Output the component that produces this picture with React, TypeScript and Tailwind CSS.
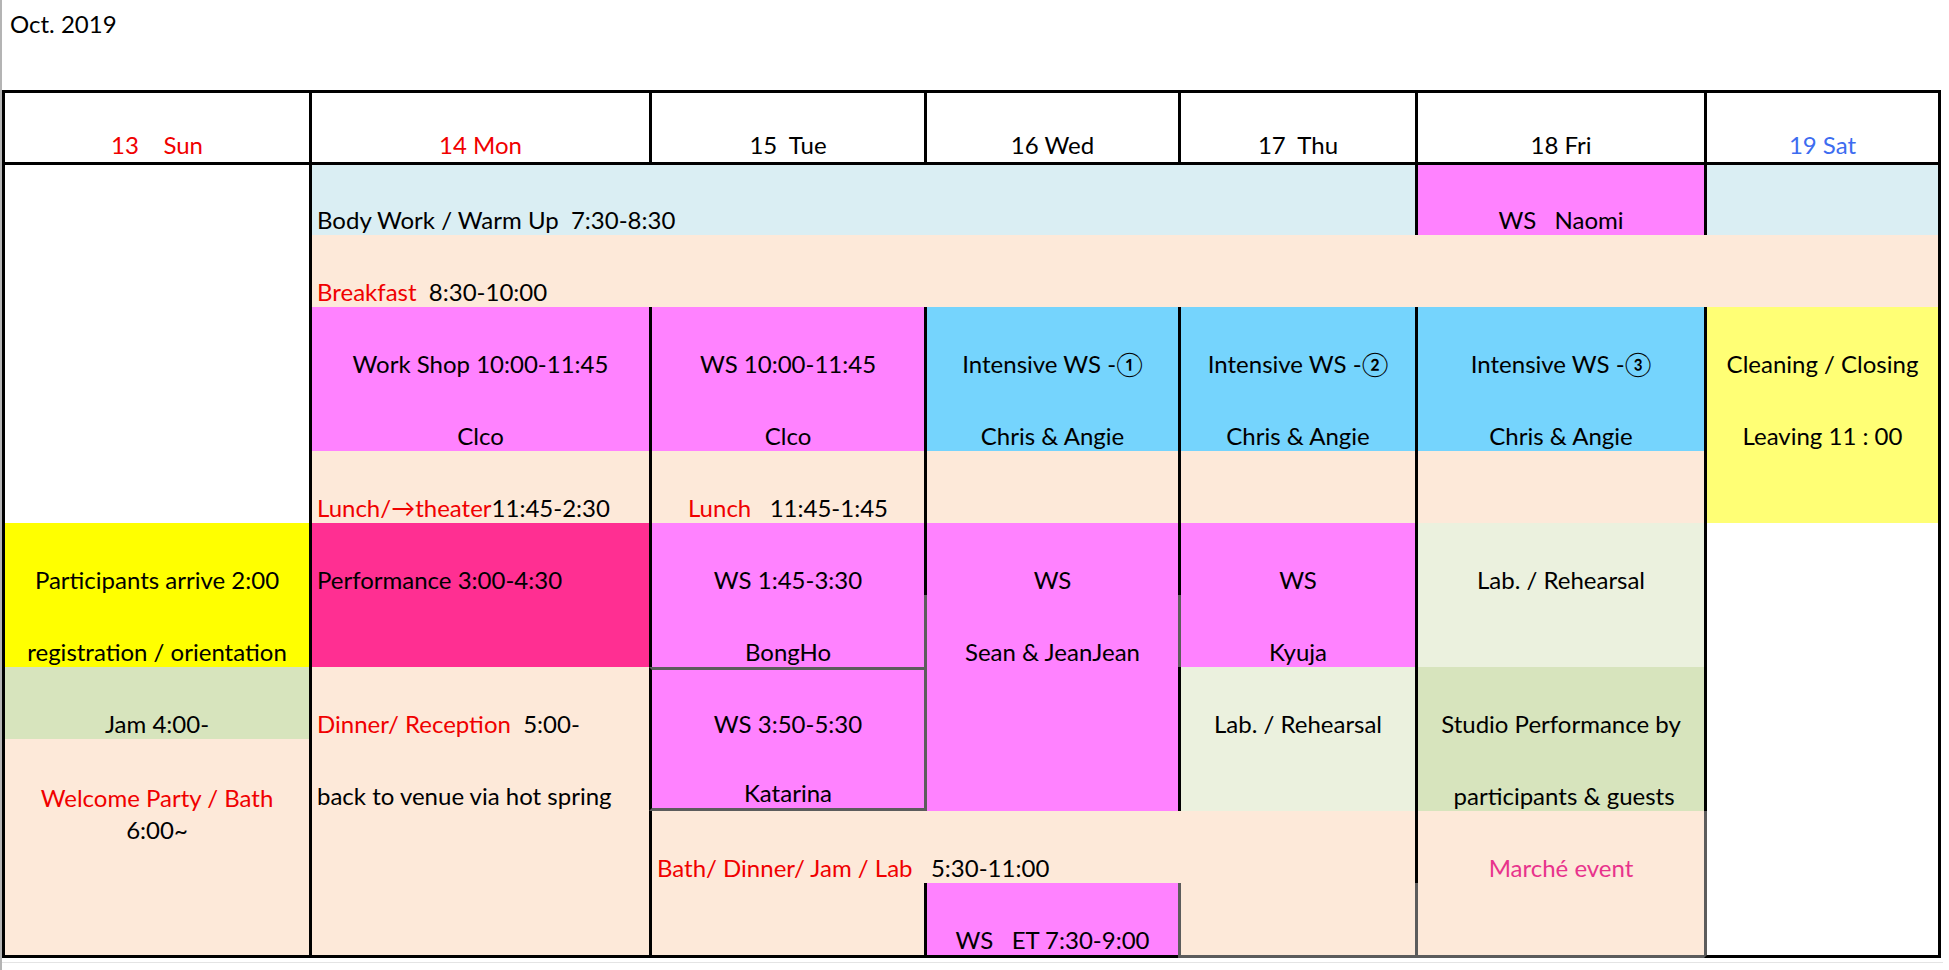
import React from "react";

type Edge = "k" | "g" | "n";

const cls = (...xs: (string | false | undefined)[]) => xs.filter(Boolean).join(" ");

const BG = {
  white: "bg-white",
  sky: "bg-[#daeef3]",
  peach: "bg-[#fde9d9]",
  magenta: "bg-[#ff82ff]",
  blue: "bg-[#75d4fd]",
  lemon: "bg-[#ffff75]",
  yellow: "bg-[#ffff00]",
  hot: "bg-[#ff2f92]",
  olive: "bg-[#d7e4bd]",
  mint: "bg-[#ebf1de]",
};

const LEFT: Record<Edge, string> = {
  k: "border-l-[3px] border-l-black",
  g: "border-l-[3px] border-l-[#5c5c5c]",
  n: "",
};

function R({ children }: { children: React.ReactNode }) {
  return <span className="text-[#f00000]">{children}</span>;
}

interface CellProps {
  pos: string;
  bg: string;
  left?: Edge;
  align?: "l" | "c";
  lines?: React.ReactNode[];
  extra?: string;
}

// one grid item; every line sits at the bottom of its own 72px band
function Cell({ pos, bg, left = "n", align = "c", lines = [""], extra }: CellProps) {
  return (
    <div className={cls("flex flex-col min-w-0", pos, bg, LEFT[left], extra)}>
      {lines.map((line, i) => (
        <div
          key={i}
          className={cls(
            "flex flex-1 basis-0 items-end",
            align === "c" ? "justify-center" : "justify-start pl-[5px]"
          )}
        >
          <span className="whitespace-pre pb-[3px] leading-[24px]">{line}</span>
        </div>
      ))}
    </div>
  );
}

const days: { label: string; color: string }[] = [
  { label: "13\u00a0\u00a0\u00a0\u00a0Sun", color: "text-[#f00000]" },
  { label: "14 Mon", color: "text-[#f00000]" },
  { label: "15\u00a0\u00a0Tue", color: "text-black" },
  { label: "16 Wed", color: "text-black" },
  { label: "17\u00a0\u00a0Thu", color: "text-black" },
  { label: "18 Fri", color: "text-black" },
  { label: "19 Sat", color: "text-[#3d6cf0]" },
];

const headerPos = [
  "col-start-1 row-start-1",
  "col-start-2 row-start-1",
  "col-start-3 row-start-1",
  "col-start-4 row-start-1",
  "col-start-5 row-start-1",
  "col-start-6 row-start-1",
  "col-start-7 row-start-1",
];

export default function App() {
  return (
    <div className="w-[1949px] h-[970px] bg-white text-black text-[24px] font-['Lato','Noto_Sans_CJK_JP',sans-serif] border-l-2 border-l-[#b4b4b4] overflow-hidden">
      <div className="h-[90px] pl-[8px] pt-[12px] leading-[24px]">Oct. 2019</div>

      <div className="grid w-[1939px] grid-cols-[304px_340px_275px_254px_237px_289px_234px] grid-rows-[72px_70px_repeat(9,72px)_75px] border-l-[3px] border-t-[3px] border-r-[3px] border-black">
        {days.map((d, i) => (
          <div
            key={d.label}
            className={cls(
              "flex items-end justify-center pb-[5px] border-b-[3px] border-b-black",
              headerPos[i],
              i > 0 && LEFT.k,
              d.color
            )}
          >
            <span className="whitespace-pre leading-[24px]">{d.label}</span>
          </div>
        ))}

        {/* Sun */}
        <Cell pos="col-start-1 row-start-2 row-span-5" bg={BG.white} />
        <Cell
          pos="col-start-1 row-start-7 row-span-2"
          bg={BG.yellow}
          lines={["Participants arrive 2:00", "registration / orientation"]}
        />
        <Cell pos="col-start-1 row-start-9" bg={BG.olive} lines={["Jam 4:00-"]} />
        <div className={cls("col-start-1 row-start-10 row-span-3 flex flex-col items-center border-b-[3px] border-b-black", BG.peach)}>
          <div className="flex h-[72px] shrink-0 items-end">
            <span className="whitespace-pre pb-[1px] leading-[24px]">
              <R>Welcome Party / Bath</R>
            </span>
          </div>
          <span className="pt-[7px] leading-[24px]">6:00~</span>
        </div>

        {/* row 1 */}
        <Cell
          pos="col-start-2 col-span-4 row-start-2"
          bg={BG.sky}
          left="k"
          align="l"
          lines={["Body Work / Warm Up\u00a0\u00a07:30-8:30"]}
        />
        <Cell pos="col-start-6 row-start-2" bg={BG.magenta} left="k" lines={["WS\u00a0\u00a0\u00a0Naomi"]} />
        <Cell pos="col-start-7 row-start-2" bg={BG.sky} left="k" />

        {/* row 2 */}
        <Cell
          pos="col-start-2 col-span-6 row-start-3"
          bg={BG.peach}
          left="k"
          align="l"
          lines={[
            <>
              <R>Breakfast</R>
              {"\u00a0\u00a08:30-10:00"}
            </>,
          ]}
        />

        {/* rows 3-4 */}
        <Cell
          pos="col-start-2 row-start-4 row-span-2"
          bg={BG.magenta}
          left="k"
          lines={["Work Shop 10:00-11:45", "Clco"]}
        />
        <Cell pos="col-start-3 row-start-4 row-span-2" bg={BG.magenta} left="k" lines={["WS 10:00-11:45", "Clco"]} />
        <Cell pos="col-start-4 row-start-4 row-span-2" bg={BG.blue} left="k" lines={["Intensive WS -\u2460", "Chris & Angie"]} />
        <Cell pos="col-start-5 row-start-4 row-span-2" bg={BG.blue} left="k" lines={["Intensive WS -\u2461", "Chris & Angie"]} />
        <Cell pos="col-start-6 row-start-4 row-span-2" bg={BG.blue} left="k" lines={["Intensive WS -\u2462", "Chris & Angie"]} />
        <Cell
          pos="col-start-7 row-start-4 row-span-3"
          bg={BG.lemon}
          left="k"
          lines={["Cleaning / Closing", "Leaving 11 : 00", ""]}
        />

        {/* row 5 */}
        <Cell
          pos="col-start-2 row-start-6"
          bg={BG.peach}
          left="k"
          align="l"
          lines={[
            <>
              <R>Lunch/{"\u2192"}theater</R>
              {"11:45-2:30"}
            </>,
          ]}
        />
        <Cell
          pos="col-start-3 row-start-6"
          bg={BG.peach}
          left="k"
          lines={[
            <>
              <R>Lunch</R>
              {"\u00a0\u00a0\u00a011:45-1:45"}
            </>,
          ]}
        />
        <Cell pos="col-start-4 row-start-6" bg={BG.peach} left="k" />
        <Cell pos="col-start-5 row-start-6" bg={BG.peach} left="k" />
        <Cell pos="col-start-6 row-start-6" bg={BG.peach} left="k" />

        {/* rows 6-7 */}
        <Cell
          pos="col-start-2 row-start-7 row-span-2"
          bg={BG.hot}
          left="k"
          align="l"
          lines={["Performance 3:00-4:30", ""]}
        />
        <Cell pos="col-start-3 row-start-7 row-span-2" bg={BG.magenta} left="k" lines={["WS 1:45-3:30", "BongHo"]} />
        <Cell pos="col-start-4 row-start-7" bg={BG.magenta} left="k" lines={["WS"]} />
        <Cell
          pos="col-start-4 row-start-8 row-span-3"
          bg={BG.magenta}
          left="g"
          lines={["Sean & JeanJean", "", ""]}
        />
        <Cell pos="col-start-5 row-start-7" bg={BG.magenta} left="k" lines={["WS"]} />
        <Cell pos="col-start-5 row-start-8" bg={BG.magenta} left="g" lines={["Kyuja"]} />
        <Cell pos="col-start-6 row-start-7 row-span-2" bg={BG.mint} left="k" lines={["Lab. / Rehearsal", ""]} />
        <Cell pos="col-start-7 row-start-7 row-span-4" bg={BG.white} left="k" />

        {/* rows 8-9 */}
        <Cell
          pos="col-start-2 row-start-9 row-span-4"
          bg={BG.peach}
          left="k"
          align="l"
          extra="border-b-[3px] border-b-black"
          lines={[
            <>
              <R>Dinner/ Reception</R>
              {"\u00a0\u00a05:00-"}
            </>,
            "back to venue via hot spring",
            "",
            "",
          ]}
        />
        <Cell
          pos="col-start-3 row-start-9 row-span-2"
          bg={BG.magenta}
          left="k"
          extra="border-t-[3px] border-t-[#5c5c5c] border-b-[3px] border-b-[#5c5c5c]"
          lines={["WS 3:50-5:30", "Katarina"]}
        />
        <Cell pos="col-start-5 row-start-9 row-span-2" bg={BG.mint} left="k" lines={["Lab. / Rehearsal", ""]} />
        <Cell
          pos="col-start-6 row-start-9 row-span-2"
          bg={BG.olive}
          left="k"
          lines={["Studio Performance by", " participants & guests"]}
        />

        {/* rows 10-11 */}
        <Cell
          pos="col-start-3 col-span-3 row-start-11"
          bg={BG.peach}
          left="k"
          align="l"
          lines={[
            <>
              <R>Bath/ Dinner/ Jam / Lab</R>
              {"\u00a0\u00a0\u00a05:30-11:00"}
            </>,
          ]}
        />
        <Cell
          pos="col-start-6 row-start-11"
          bg={BG.peach}
          left="k"
          lines={[<span className="text-[#e8338c]">Marché event</span>]}
        />
        <Cell
          pos="col-start-7 row-start-11 row-span-2"
          bg={BG.white}
          left="g"
          extra="border-b-[3px] border-b-black"
        />
        <Cell pos="col-start-3 row-start-12" bg={BG.peach} left="k" extra="border-b-[3px] border-b-black" />
        <Cell
          pos="col-start-4 row-start-12"
          bg={BG.magenta}
          left="k"
          extra="border-b-[3px] border-b-black"
          lines={["WS\u00a0\u00a0\u00a0ET 7:30-9:00"]}
        />
        <Cell pos="col-start-5 row-start-12" bg={BG.peach} left="g" extra="border-b-[3px] border-b-[#5c5c5c]" />
        <Cell pos="col-start-6 row-start-12" bg={BG.peach} left="g" extra="border-b-[3px] border-b-[#5c5c5c]" />
      </div>

      <div className="mt-[4px] h-[1px] w-[1941px] bg-[#e4e4e4]" />
    </div>
  );
}
